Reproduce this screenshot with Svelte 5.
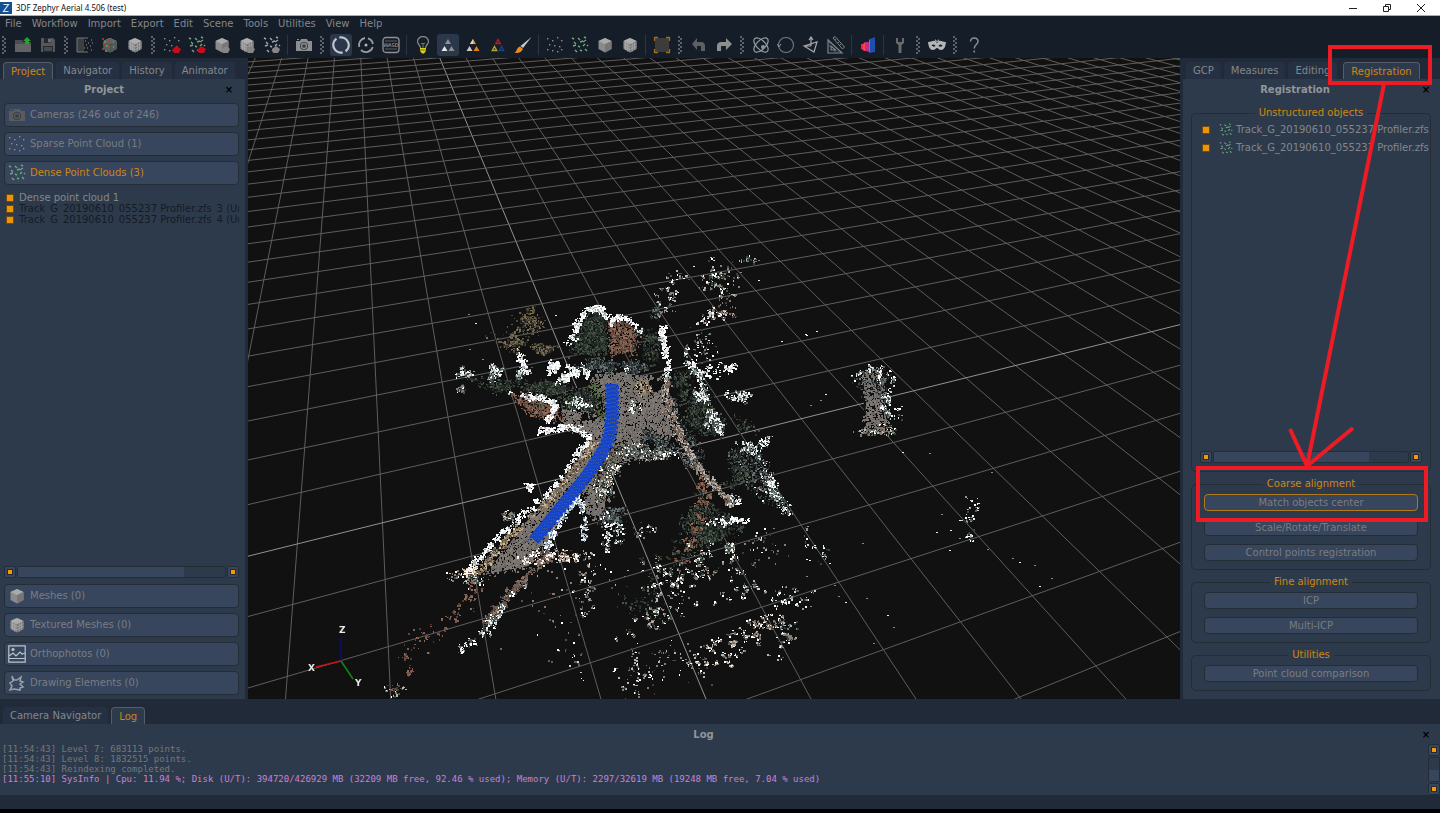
<script>
  /*
    Zephyr workspace shell.

    Top:    title bar, menus, tool strip.
    Middle: project dock, 3D view, registration dock.
    Bottom: log dock.
  */
  import { onMount } from "svelte";

  const menus = ["File", "Workflow", "Import", "Export", "Edit", "Scene", "Tools", "Utilities", "View", "Help"];

  // "|" is a separator, ":" is a drag grip
  const tools = [
    ":", "open", "save", ":", "import", "densecube", "texcube", ":", "sparseup", "denseup", "cubeup",
    "texup", "cloudup", "|", "camera", ":", "orbit*", "pivot", "wasd", "|", "bulb", "tri*", "triwarm",
    "triline", "brush", "|", "sparse", "dense", "cube", "texcube", "|", "select", ":", "undo", "redo",
    ":", "atom", "circle", "plane", "ruler", "|", "bars", "|", "wrench", ":", "mask", ":", "help",
  ];

  const upper = [
    { icon: "camera", label: "Cameras (246 out of 246)" },
    { icon: "sparse", label: "Sparse Point Cloud (1)" },
    { icon: "dense", label: "Dense Point Clouds (3)", active: true },
  ];
  const lower = [
    { icon: "cube", label: "Meshes (0)" },
    { icon: "texcube", label: "Textured Meshes (0)" },
    { icon: "photo", label: "Orthophotos (0)" },
    { icon: "draw", label: "Drawing Elements (0)" },
  ];
  const clouds = [
    { label: "Dense point cloud 1" },
    { label: "Track_G_20190610_055237 Profiler.zfs_3 (Unstructured)", dark: true },
    { label: "Track_G_20190610_055237 Profiler.zfs_4 (Unstructured)", dark: true },
  ];
  const objects = ["Track_G_20190610_055237 Profiler.zfs", "Track_G_20190610_055237 Profiler.zfs"];
  const groups = [
    { title: "Coarse alignment", items: ["Match objects center", "Scale/Rotate/Translate", "Control points registration"] },
    { title: "Fine alignment", items: ["ICP", "Multi-ICP"] },
    { title: "Utilities", items: ["Point cloud comparison"] },
  ];
  const log = ["[11:54:43] Level 7: 683113 points.", "[11:54:43] Level 8: 1832515 points.", "[11:54:43] Reindexing completed."];
  const sysinfo =
    "[11:55:10] SysInfo | Cpu: 11.94 %; Disk (U/T): 394720/426929 MB (32209 MB free, 92.46 % used); Memory (U/T): 2297/32619 MB (19248 MB free, 7.04 % used)";

  const dots = [[2, 3], [7, 5], [12, 2], [16, 5], [4, 9], [9, 10], [14, 11], [2, 14], [7, 15], [12, 16], [16, 14]];
  const dashes = [[1, 2, 2, 1], [7, 2, 2, 2], [13, 1, 2, 1], [15, 4, -3, 2], [3, 6, 2, 2], [9, 6, 3, -1], [2, 10, 3, -1], [7, 10, 2, 1], [12, 10, 2, -2], [4, 14, 2, 2], [9, 14, 2, 1], [14, 13, 2, 2], [16, 9, 1, 1]];

  let canvas;

  function makeRandom(seed) {
    let s = seed;
    return () => {
      s = (s * 1664525 + 1013904223) >>> 0;
      return s / 4294967296;
    };
  }

  // ground plane (i, j) to view coordinates
  function project(i, j) {
    const w = 0.02786 * i - 0.0707 * j + 1;
    return [(86.3 * i - 24.8 * j + 609.4) / w, (-4.23 * i + 11.05 * j + 466.4) / w];
  }

  function drawGrid(ctx) {
    const line = (a, b, major) => {
      ctx.strokeStyle = major ? "#929292" : "#5e5e5e";
      ctx.beginPath();
      ctx.moveTo(...a);
      ctx.lineTo(...b);
      ctx.stroke();
    };
    for (let i = -22; i <= 60; i++) {
      const near = (0.02786 * i + 0.9) / 0.0707;
      line(project(i, -50), project(i, near), i === 0);
    }
    for (let j = -50; j <= 9; j++) {
      const near = (-0.9 + 0.0707 * j) / 0.02786;
      line(project(near, j), project(60, j), j === 0);
    }
  }

  const white = ["#ffffff", "#f2f4f2", "#c9d1d0", "#8d9898", "#55605c", "#3a4442"];
  const snow = ["#ffffff", "#ffffff", "#f4f4f2", "#dce2e4", "#a9b1b2"];
  const green = ["#2b352d", "#39443a", "#222b29", "#4a5546", "#1a2220"];
  const slate = ["#4b5352", "#2a3233", "#6d7473", "#1b2224", "#3a4445"];
  const road = ["#77716d", "#7e7772", "#716b68", "#847d77", "#696562"];
  const brick = ["#7b5849", "#85604e", "#62473d", "#8f6d5a", "#4d3a33"];
  const tan = ["#94806a", "#82715a", "#a8936f", "#6d6253", "#c9bba0", "#4e463c"];
  const olive = ["#4d483a", "#645a45", "#37362d", "#7c6c50", "#24251f"];
  const ice = ["#e4eef5", "#b9cad6", "#92a4b2", "#ffffff", "#6f808e"];
  const mixed = ["#ffffff", "#b3b7b3", "#7e827c", "#8b7566", "#4c524d", "#31413c"];
  const black = ["#111111", "#111111", "#0c0f0e"];

  // polygons: [corners, count, colours]
  const areas = [
    [[[592, 378], [612, 372], [660, 378], [668, 412], [672, 435], [648, 458], [618, 462], [606, 488], [604, 522], [584, 510], [586, 492], [572, 498], [548, 540], [528, 566], [486, 574], [520, 530], [572, 468], [590, 436], [562, 425], [562, 408], [592, 402]], 30000, road],
    [[[570, 346], [580, 324], [594, 308], [606, 312], [607, 350], [596, 356], [572, 353]], 1500, green],
    [[[608, 322], [622, 317], [638, 328], [634, 352], [610, 354]], 700, brick],
    [[[512, 394], [532, 396], [556, 405], [560, 418], [544, 418], [526, 410]], 1200, brick],
    [[[560, 396], [590, 386], [599, 398], [600, 414], [574, 408], [560, 404]], 800, green],
    [[[644, 430], [664, 438], [678, 450], [658, 456], [636, 458]], 400, slate],
    [[[690, 394], [706, 388], [712, 410], [724, 420], [718, 434], [700, 432], [686, 420]], 1000, green],
    [[[672, 398], [680, 420], [702, 448], [700, 468], [690, 458], [672, 428]], 700, slate],
    [[[730, 450], [744, 444], [760, 456], [776, 492], [786, 510], [764, 500], [744, 480], [732, 468]], 1000, slate],
    [[[692, 508], [706, 500], [726, 514], [744, 528], [718, 540], [690, 536], [682, 525]], 900, green],
    [[[862, 370], [880, 370], [884, 400], [888, 432], [864, 434], [866, 405]], 700, road],
    [[[600, 446], [620, 448], [610, 476], [602, 500], [596, 480]], 500, olive],
    [[[594, 382], [602, 400], [601, 416], [596, 412], [600, 400], [590, 388]], 240, ["#4a5a35", "#59684a"]],
    [[[636, 384], [648, 382], [652, 391], [640, 393]], 120, tan],
  ];

  // thick lines: [points, spread, count, colours]
  const strands = [
    [[[567, 343], [576, 326], [585, 311], [598, 306], [606, 316]], 4, 330, snow],
    [[[609, 323], [614, 318], [625, 317], [640, 328]], 4, 170, snow],
    [[[510, 393], [526, 395], [541, 398], [556, 404], [549, 416], [539, 424]], 4, 300, snow],
    [[[594, 442], [576, 466], [552, 496], [520, 524], [494, 552], [476, 574]], 5, 1000, tan],
    [[[538, 432], [560, 427], [578, 429], [589, 438], [572, 460], [548, 492], [522, 514], [496, 538], [478, 558], [467, 572]], 4, 900, snow],
    [[[661, 326], [663, 340], [665, 356], [667, 378]], 5, 280, snow],
    [[[666, 378], [668, 405], [680, 438], [698, 466], [716, 486], [732, 504]], 7, 1100, ["#8a817a", "#a49a92", "#6a605a", "#75584b", "#c0bab4", "#4c4845"]],
    [[[700, 478], [706, 492], [698, 515], [690, 538], [680, 560]], 9, 320, brick],
    [[[544, 552], [555, 528], [567, 508], [577, 499], [583, 508], [584, 548]], 4, 600, ice],
    [[[604, 510], [607, 530], [606, 552]], 8, 120, white],
    [[[620, 520], [618, 545]], 8, 80, white],
    [[[550, 552], [530, 572], [512, 590], [498, 608], [484, 624]], 8, 700, ["#7b5f50", "#6b5f56", "#4d3f38", "#8f7a6a", "#5a5450"]],
    [[[522, 580], [502, 606], [484, 630], [460, 650]], 7, 230, white],
    [[[478, 570], [474, 588], [462, 608], [448, 622], [430, 640], [404, 660], [390, 690]], 16, 190, brick],
    [[[520, 560], [540, 556], [564, 555], [582, 555]], 10, 260, ["#ffffff", "#b79d8b", "#82695a", "#eeeeee"]],
    [[[584, 550], [586, 580], [584, 610]], 14, 100, mixed],
    [[[688, 362], [700, 368], [716, 372], [736, 365]], 8, 150, snow],
    [[[686, 348], [688, 366], [700, 374], [703, 398], [708, 404]], 7, 240, white],
    [[[710, 412], [718, 422], [719, 434]], 7, 160, white],
    [[[724, 396], [736, 394], [746, 392]], 10, 90, white],
    [[[738, 446], [752, 448], [764, 468], [771, 482], [775, 498]], 9, 300, white],
    [[[752, 447], [770, 440]], 9, 70, white],
    [[[776, 496], [788, 510]], 12, 80, white],
    [[[706, 520], [724, 522], [746, 518]], 6, 120, snow],
    [[[716, 268], [716, 285], [726, 290]], 18, 110, mixed],
    [[[700, 318], [718, 314], [737, 310]], 11, 130, ["#ffffff", "#88736b", "#51443e", "#c7c7c7"]],
    [[[654, 312], [664, 304], [675, 286], [680, 274]], 18, 120, mixed],
    [[[854, 374], [870, 367], [884, 374], [887, 392], [888, 410], [896, 424]], 14, 260, white],
    [[[744, 262], [754, 260]], 9, 26, mixed],
    [[[972, 496], [973, 512], [966, 522]], 12, 38, white],
    [[[964, 540], [972, 532]], 9, 20, white],
    [[[652, 566], [662, 582], [652, 606], [636, 640]], 30, 260, mixed],
    [[[704, 552], [690, 576], [672, 604]], 30, 300, mixed],
    [[[728, 560], [744, 572], [730, 602]], 28, 160, mixed],
    [[[768, 590], [788, 598], [806, 604]], 24, 90, white],
    [[[802, 528], [806, 548], [828, 560]], 16, 36, white],
    [[[696, 668], [722, 652], [748, 634], [772, 624]], 24, 420, ["#ffffff", "#bab4ac", "#8b7a6c", "#66635e", "#4b4844"]],
    [[[770, 620], [788, 632], [778, 650]], 20, 100, mixed],
    [[[622, 664], [640, 690]], 34, 80, mixed],
    [[[560, 650], [590, 680]], 30, 26, white],
    [[[390, 690], [400, 694]], 14, 36, mixed],
    [[[704, 492], [690, 560], [640, 570]], 34, 200, green],
  ];

  // round clumps: [x, y, rx, ry, count, colours]
  const clumps = [
    [522, 360, 8, 10, 130, snow], [522, 373, 8, 9, 130, white], [494, 370, 9, 10, 170, white], [552, 368, 7, 11, 160, snow],
    [564, 378, 9, 7, 140, snow], [574, 371, 9, 8, 140, snow], [585, 372, 6, 10, 140, snow], [557, 385, 6, 6, 70, snow],
    [462, 372, 10, 8, 70, white], [458, 388, 10, 7, 40, mixed], [530, 320, 20, 14, 240, olive], [512, 342, 16, 10, 170, olive],
    [545, 348, 14, 8, 170, olive], [500, 385, 26, 10, 200, green], [545, 388, 22, 9, 460, green], [578, 404, 13, 8, 160, white],
    [600, 365, 26, 9, 420, slate], [632, 366, 16, 8, 320, slate], [650, 345, 22, 22, 250, green], [624, 368, 4, 5, 60, white],
    [634, 408, 7, 7, 70, white], [655, 312, 8, 10, 90, slate], [680, 385, 14, 20, 200, green], [712, 420, 10, 10, 170, white],
    [700, 395, 8, 12, 120, white], [742, 396, 8, 7, 80, white], [740, 425, 22, 14, 50, green], [526, 486, 7, 4, 70, snow],
    [508, 516, 9, 7, 90, mixed], [470, 571, 8, 7, 160, ["#ffffff", "#f0dcc0", "#d0b08a"]], [470, 575, 20, 16, 100, mixed],
    [610, 470, 12, 14, 200, mixed], [600, 490, 14, 12, 160, mixed], [630, 450, 14, 9, 200, mixed], [610, 515, 18, 10, 320, slate],
    [655, 440, 14, 10, 300, slate], [660, 452, 24, 8, 170, mixed], [690, 460, 10, 12, 140, slate], [650, 530, 20, 14, 40, mixed],
    [734, 500, 8, 10, 80, white], [710, 535, 26, 14, 240, green], [728, 548, 10, 8, 80, mixed], [875, 385, 20, 20, 110, slate],
    [878, 430, 24, 8, 80, mixed], [705, 345, 30, 26, 60, mixed], [762, 480, 30, 34, 50, mixed], [740, 470, 16, 20, 180, green],
    [680, 650, 70, 44, 70, mixed], [560, 600, 70, 44, 60, mixed], [715, 300, 40, 40, 60, mixed], [540, 405, 8, 5, 80, olive],
    [640, 600, 40, 40, 70, green], [500, 330, 50, 26, 30, olive], [755, 560, 50, 40, 50, mixed], [440, 640, 60, 40, 30, brick],
    [585, 415, 10, 6, 60, black], [656, 384, 6, 6, 240, black], [650, 444, 9, 7, 60, black], [640, 404, 5, 3, 20, black],
  ];

  const strays = [
    [805, 334], [816, 331], [820, 400], [810, 405], [825, 394], [902, 452], [929, 453], [991, 472], [941, 514], [936, 532],
    [950, 530], [949, 550], [987, 549], [1012, 558], [1019, 562], [1034, 565], [1051, 578], [1039, 586], [862, 543], [838, 596],
    [866, 598], [845, 602], [887, 615], [893, 627], [873, 643], [834, 585], [822, 556], [829, 563], [806, 576], [810, 606],
    [468, 314], [475, 323], [555, 315], [469, 349], [482, 359], [758, 280], [740, 272], [693, 266], [781, 341], [806, 335],
  ];

  function drawCloud(ctx) {
    const random = makeRandom(4506);
    const bell = () => (random() + random() + random()) / 1.5 - 1;
    const dot = (x, y, colors) => {
      ctx.fillStyle = colors[Math.floor(random() * colors.length)];
      ctx.fillRect(Math.round(x), Math.round(y), random() < 0.6 ? 2 : 1, random() < 0.6 ? 2 : 1);
    };

    for (const [corners, count, colors] of areas) {
      const path = new Path2D();
      corners.forEach(([x, y], n) => (n ? path.lineTo(x, y) : path.moveTo(x, y)));
      path.closePath();
      const xs = corners.map((c) => c[0]);
      const ys = corners.map((c) => c[1]);
      const left = Math.min(...xs), top = Math.min(...ys);
      const w = Math.max(...xs) - left, h = Math.max(...ys) - top;
      ctx.save();
      ctx.clip(path);
      for (let n = 0; n < count; n++) dot(left + random() * w, top + random() * h, colors);
      ctx.restore();
      // frayed outline
      for (let n = 0; n < corners.length * 36; n++) {
        const k = Math.floor(random() * corners.length);
        const a = corners[k], b = corners[(k + 1) % corners.length];
        const t = random();
        dot(a[0] + (b[0] - a[0]) * t + bell() * 5, a[1] + (b[1] - a[1]) * t + bell() * 5, random() < 0.4 ? black : colors);
      }
    }
    for (const [x, y, rx, ry, count, colors] of clumps) {
      // a few knots per clump keep the edges ragged
      const knots = Array.from({ length: 4 + Math.floor(count / 18) }, () => [bell() * rx * 1.1, bell() * ry * 1.1]);
      for (let n = 0; n < count; n++) {
        const [kx, ky] = knots[Math.floor(random() * knots.length)];
        dot(x + kx + bell() * rx * 0.5, y + ky + bell() * ry * 0.5, colors);
      }
    }
    for (const [points, spread, count, colors] of strands) {
      const knots = Array.from({ length: 8 + Math.floor(count / 7) }, () => [random() * (points.length - 1), bell() * spread * 0.9, bell() * spread * 0.9]);
      for (let n = 0; n < count; n++) {
        const [at, kx, ky] = knots[Math.floor(random() * knots.length)];
        const k = Math.floor(at);
        const [ax, ay] = points[k];
        const [bx, by] = points[k + 1];
        const t = at - k;
        dot(ax + (bx - ax) * t + kx + bell() * 3.5, ay + (by - ay) * t + ky + bell() * 3.5, colors);
      }
    }
    for (const [x, y] of strays) {
      ctx.fillStyle = random() < 0.5 ? "#eeeeee" : "#888888";
      ctx.fillRect(x, y, 2, 1);
    }
  }

  // scanner track, drawn over the cloud
  function drawTrack(ctx) {
    const random = makeRandom(77);
    const trace = (dx, dy) => {
      ctx.beginPath();
      ctx.moveTo(612 + dx, 384 + dy);
      ctx.bezierCurveTo(612 + dx, 412 + dy, 614 + dx, 432 + dy, 603 + dx, 450 + dy);
      ctx.bezierCurveTo(592 + dx, 470 + dy, 580 + dx, 484 + dy, 568 + dx, 498 + dy);
      ctx.lineTo(534 + dx, 540 + dy);
      ctx.stroke();
    };
    ctx.lineJoin = "round";
    ctx.strokeStyle = "#1243cc";
    ctx.lineWidth = 11;
    trace(0, 0);
    ctx.lineWidth = 2;
    ctx.setLineDash([3, 2]);
    trace(-6, 0);
    trace(6, 2);
    ctx.lineWidth = 1;
    ctx.setLineDash([1, 3]);
    for (const dx of [-5, -3, -1, 1, 3, 5]) {
      ctx.strokeStyle = dx % 3 ? "#5a6380" : "#6f6d70";
      ctx.lineDashOffset = Math.floor(random() * 4);
      trace(dx, 0);
    }
    ctx.setLineDash([]);
  }

  onMount(() => {
    const ctx = canvas.getContext("2d");
    ctx.fillStyle = "#111111";
    ctx.fillRect(0, 0, canvas.width, canvas.height);
    ctx.translate(-248, -58);
    drawGrid(ctx);
    drawCloud(ctx);
    drawTrack(ctx);
  });
</script>

{#snippet specks(green)}
  {#if green}
    {#each dashes as [x, y, dx, dy], n}
      <path d={`M${x} ${y}l${dx} ${dy}`} stroke={n % 3 ? "#5fae72" : "#8b9490"} stroke-width="1.4" />
    {/each}
  {:else}
    {#each dots as [x, y]}
      <rect x={x - 1} y={y - 1} width="1.4" height="1.4" fill="#8d8f92" />
    {/each}
  {/if}
{/snippet}

{#snippet box(textured)}
  <path d="M9 2l6.500 3v8L9 16.500 2.500 13V5z" fill="#8b8b8b" />
  <path d="M9 2l6.500 3L9 8.200 2.500 5z" fill="#a9a9a9" />
  <path d="M9 8.200L15.500 5v8L9 16.500z" fill="#777" />
  {#if textured}
    <path d="M4.500 4v10M6.700 3v12.500M11.300 3v12.500M13.500 4v10M2.500 7.600L9 11l6.500-3.400M2.500 10.300L9 13.700l6.500-3.400M4.700 4l6.500 3M6.800 3l6.500 3" stroke="#b4b4b4" stroke-width=".6" fill="none" />
  {/if}
{/snippet}

{#snippet icon(name)}
  <svg class="icon" viewBox="0 0 18 18" fill="none" aria-hidden="true">
    {#if name === "open"}
      <path d="M1 4h7l1 2h8v10H1z" fill="#4b4d4f" /><path d="M1 8h16v8H1z" fill="#606264" />
      <path d="M13 1l4 4h-2v3h-4V5H9z" fill="#20a52b" />
    {:else if name === "save"}
      <path d="M2 2h12l2 2v12H2z" fill="#55575a" /><path d="M5 2h7v5H5zM4 10h10v6H4z" fill="#25292e" />
      <path d="M9.500 3h2v3h-2zM5 12h8M5 14h8" stroke="#6a6c6e" fill="#777" />
    {:else if name === "import"}
      <path d="M1 2h7v14H1z" fill="#3c3e40" /><path d="M12 2H1v14h11" stroke="#74777a" />
      <path d="M9 5h1M12 7h1M15 4h1M10 9h1M14 10h1M11 12h1M15 14h1M16 7h1M8 12h1" stroke="#999" />
    {:else if name === "densecube"}
      {@render box(true)}
      <path d="M9 2l6.500 3v8L9 16.500 2.500 13V5z" fill="#333c38" fill-opacity=".65" />
      <path d="M1 3h2M2 8h2M1 13h2M6 5h2M7 11h2" stroke="#c33838" stroke-width="1.500" />
      <path d="M3 6h2M5 10h2M4 15h2M12 6h1M12 11h1" stroke="#4fae5a" stroke-width="1.500" />
    {:else if name === "cube" || name === "cubeup"}
      {@render box(false)}
      {#if name === "cubeup"}<path d="M13 10l4 3-2 4h-5l-1-4z" fill="#868686" />{/if}
    {:else if name === "texcube" || name === "texup"}
      {@render box(true)}
      {#if name === "texup"}<path d="M13 10l4 3-2 4h-5l-1-4z" fill="#868686" />{/if}
    {:else if name === "sparse" || name === "sparseup"}
      {@render specks(false)}
      {#if name === "sparseup"}<path d="M13 10l5 3-2 4h-5l-2-3z" fill="#cb0b17" />{/if}
    {:else if name === "dense" || name === "denseup"}
      {@render specks(true)}
      {#if name === "denseup"}<path d="M13 10l5 3-2 4h-5l-2-3z" fill="#cb0b17" />{/if}
    {:else if name === "cloudup"}
      {#each dashes as [x, y, dx, dy]}
        <path d={`M${x} ${y}l${dx} ${dy}`} stroke="#a4a6a8" stroke-width="1.4" />
      {/each}
      <path d="M13 10l4 3-2 4h-5l-1-4z" fill="#868686" />
    {:else if name === "camera"}
      <path d="M1 5h4l1-2h6l1 2h4v10H1z" fill="currentColor" /><path d="M2 3h2v1H2z" fill="currentColor" />
      <circle cx="9" cy="10" r="4" fill="#343d4a" /><circle cx="9" cy="10" r="2.500" stroke="currentColor" stroke-width="1.300" />
    {:else if name === "orbit"}
      <g transform="rotate(-28 9 9)">
        <path d="M8 1.200a7.800 7.800 0 0 0-1 15.200M10 16.800a7.800 7.800 0 0 0 1-15.200" stroke="#c6c6c6" stroke-width="2.200" />
      </g>
    {:else if name === "pivot"}
      <path d="M8 2a7 7 0 0 0-5.700 9M4 14a7 7 0 0 0 11.700-3M15.900 8A7 7 0 0 0 11 2.400" stroke="#9c9c9c" stroke-width="1.800" />
      <circle cx="9" cy="9" r="1.500" fill="#b5b5b5" />
    {:else if name === "wasd"}
      <rect x="1" y="1.500" width="16" height="15" rx="3" stroke="#8f8f8f" stroke-width="1.300" />
      <path d="M3 5h12M3 13h12" stroke="#5b5f64" />
      <text x="9" y="11" text-anchor="middle" font-size="5" fill="#b0b0b0">WASD</text>
    {:else if name === "bulb"}
      <path d="M6.500 12c0-3-3-3.500-3-6.500a5.500 5 0 0 1 11 0c0 3-3 3.500-3 6.500" stroke="#858585" stroke-width="1.300" />
      <path d="M7 7l1 1 1-1 1 1 1-1M9 8v4" stroke="#7c8120" /><path d="M6 12h6v3l-2 2.500H8L6 15z" fill="#d6cf1d" />
      <path d="M6 14h6" stroke="#7b7511" />
    {:else if name === "tri"}
      <path d="M9 3l3 5H6z" fill="#8f8f8f" /><path d="M5.500 10l3 5h-6z" fill="#e6e6e6" /><path d="M12.500 10l3 5h-6z" fill="#8f8f8f" />
    {:else if name === "triwarm"}
      <path d="M9 3l3 5H6z" fill="#f29a25" /><path d="M9 3v5H6z" fill="#e8d8bd" />
      <path d="M5.500 10l3 5h-6z" fill="#c8c8c8" /><path d="M12.500 10l3 5h-6z" fill="#ed7f10" />
    {:else if name === "triline"}
      <path d="M9 3.500l2.200 4H6.800z" stroke="#ad202c" stroke-width="1.400" /><path d="M5.500 10.500l2.200 4H3.300z" stroke="#b6a727" stroke-width="1.400" />
      <path d="M12.500 10.500l2.200 4h-4.400z" stroke="#1d437c" stroke-width="1.400" />
    {:else if name === "brush"}
      <path d="M17.500 1L9 12 6.500 10z" fill="#c9c9c9" /><path d="M6 10.500l3 2.500c-2 4-5 4-8.500 4 2-1 2.500-6 5.500-6.500z" fill="#f18a1c" />
    {:else if name === "select"}
      <path d="M2 2h14v14H2z" fill="#3d3c3b" /><path d="M1.500 5V1.500H5M13 1.500h3.500V5M16.500 13v3.500H13M5 16.500H1.500V13" stroke="#a5691b" stroke-width="1.300" />
    {:else if name === "undo"}
      <path d="M7 2v4h4c3 0 4 2 4 4v5h-4v-5H7v4L2 8z" fill="#5d5f61" />
    {:else if name === "redo"}
      <path d="M11 2l6 6-6 6v-4H6v5H2v-5c0-3 2-4 4-4h5z" fill="#8e8e8c" />
    {:else if name === "atom"}
      <ellipse cx="9" cy="9" rx="9" ry="4.500" transform="rotate(45 9 9)" stroke="#989da4" stroke-width="1.200" />
      <ellipse cx="9" cy="9" rx="9" ry="4.500" transform="rotate(-45 9 9)" stroke="#989da4" stroke-width="1.200" />
      <circle cx="11" cy="11" r="2" fill="#8e939b" />
    {:else if name === "circle"}
      <circle cx="9" cy="9" r="7.500" stroke="#757a80" stroke-width="1.100" /><path d="M0 8l2 3 2-3" stroke="#8e9298" />
    {:else if name === "plane"}
      <path d="M9 10V2M7 4l2-3 2 3M2 10l13-4-3 10zM2 10l7 0" stroke="#a9a9a9" stroke-width="1.200" />
    {:else if name === "ruler"}
      <path d="M1 4v13h14zM4 10v4h4.500z" stroke="#81858a" stroke-width="1.200" /><path d="M6 2l2-1.500 9.500 10.500-2 2z" stroke="#81858a" />
      <path d="M2 7h2M2 10h1M8 16v-2M11 16v-1M9 3l-1 1M12 6l-1 1M14 8l-1 1" stroke="#81858a" stroke-width=".8" />
    {:else if name === "bars"}
      <path d="M2 8h4v7l-4-2z" fill="#ef2738" /><path d="M6 6h5v10l-5-1z" fill="#b4328c" /><path d="M6 6l-2 2v6l2 1z" fill="#ff4050" />
      <path d="M11 3l5-2v15l-5 1z" fill="#1d4fb0" /><path d="M11 3l-1 1v12l1 1z" fill="#4485e6" />
    {:else if name === "wrench"}
      <path d="M5 2v5l2.500 2v8h3V9L13 7V2l-2 0v4H7V2z" fill="#686a6c" />
    {:else if name === "mask"}
      <path d="M0 6c2 .5 5-2 7-1l2 2 2-2c2-1 5 1.500 7 1-.5 5-2 8-5 8-2 0-3-2-4-2s-2 2-4 2c-3 0-4.500-3-5-8z" fill="#b4b5b7" />
      <path d="M3.500 9.500c1.500-1.500 3-1 4 .5-1 1-3 1-4-.5zM10.500 10c1-1.500 2.500-2 4-.5-1 1.500-3 1.500-4 .5z" fill="#151d28" /><path d="M7 3l2 2 2-2v3H7z" fill="#9b9b9b" />
    {:else if name === "help"}
      <path d="M5.500 5.500c0-5 7.500-4.500 7.500 0 0 3-3.800 3-3.800 7M9.200 14.500v2" stroke="#8b8f93" stroke-width="1.500" />
    {:else if name === "photo"}
      <path d="M.8.800h16.400v16.400H.8zM1 13.500h16M1 11l4-3 3 3 4-4 2 2 3-1" stroke="#bcc3cc" stroke-width="1.200" /><circle cx="5" cy="4.500" r="1.600" fill="#bcc3cc" />
    {:else if name === "draw"}
      <path d="M4 2l2 4 3 0 4-3-1 4 3 1-3 2 3 3-3 1 0 2-6-1-4 1 2-4-2-3 3-2z" stroke="#9aa0a8" stroke-width="1.500" />
    {/if}
  </svg>
{/snippet}

{#snippet scroller(vertical)}
  <div class="scroller" class:scroller--vertical={vertical}>
    <button class="step" aria-label="Scroll back"></button>
    <div class="trough"><div class="thumb"></div></div>
    <button class="step" aria-label="Scroll forward"></button>
  </div>
{/snippet}

<div class="shell">
  <header class="titlebar">
    <svg class="logo" viewBox="0 0 12 12" aria-hidden="true">
      <rect width="12" height="12" fill="#144f91" />
      <path d="M3.500 2.500h5L3.500 9.500h5" fill="none" stroke="#d6e5f2" stroke-width="1.200" />
    </svg>
    <span class="caption">3DF Zephyr Aerial 4.506 (test)</span>
    <div class="window-buttons">
      <button aria-label="Minimize"><svg viewBox="0 0 10 10"><path d="M1 5.500h8" /></svg></button>
      <button aria-label="Restore"><svg viewBox="0 0 10 10"><path d="M1.500 3.500h5v5h-5zM3.500 3.500v-2h5v5h-2" /></svg></button>
      <button aria-label="Close"><svg viewBox="0 0 10 10"><path d="M1 1l8 8M9 1L1 9" /></svg></button>
    </div>
  </header>

  <nav class="menubar">
    {#each menus as menu}
      <button>{menu}</button>
    {/each}
  </nav>

  <div class="toolbar" role="toolbar" aria-label="Tools">
    {#each tools as tool}
      {#if tool === "|"}
        <span class="separator"></span>
      {:else if tool === ":"}
        <span class="grip"></span>
      {:else}
        <button class="tool" class:tool--on={tool.endsWith("*")} aria-label={tool.replace("*", "")}>
          {@render icon(tool.replace("*", ""))}
        </button>
      {/if}
    {/each}
  </div>

  <main class="workspace">
    <aside class="dock dock--left">
      <div class="tabs">
        <button class="tab tab--on">Project</button>
        <button class="tab">Navigator</button>
        <button class="tab">History</button>
        <button class="tab">Animator</button>
      </div>
      <section class="panel panel--project">
        <div class="panel-head"><h2>Project</h2><button class="close" aria-label="Close Project">×</button></div>
        <div class="stack">
          {#each upper as row}
            <button class="section" class:section--on={row.active}>{@render icon(row.icon)}{row.label}</button>
          {/each}
        </div>
        <div class="clouds">
          {#each clouds as cloud}
            <label class:dark={cloud.dark}><input type="checkbox" checked /><span>{cloud.label}</span></label>
          {/each}
        </div>
        {@render scroller(false)}
        <div class="stack">
          {#each lower as row}
            <button class="section">{@render icon(row.icon)}{row.label}</button>
          {/each}
        </div>
      </section>
    </aside>

    <div class="view">
      <canvas bind:this={canvas} width="932" height="641"></canvas>
      <svg class="axes" viewBox="0 0 64 68" role="img" aria-label="Axes">
        <path d="M36 35V12" stroke="#0c0c78" stroke-width="1.500" />
        <path d="M36 35L11 41" stroke="#c81414" stroke-width="1.500" />
        <path d="M36 35l12 18" stroke="#0d8a16" stroke-width="1.500" />
        <text x="34" y="7">Z</text>
        <text x="3" y="45">X</text>
        <text x="50" y="60">Y</text>
      </svg>
    </div>

    <aside class="dock dock--right">
      <div class="tabs">
        <button class="tab">GCP</button>
        <button class="tab">Measures</button>
        <button class="tab">Editing</button>
        <button class="tab tab--on">Registration</button>
      </div>
      <section class="panel panel--registration">
        <div class="panel-head"><h2>Registration</h2><button class="close" aria-label="Close Registration">×</button></div>
        <fieldset class="group group--objects">
          <legend>Unstructured objects</legend>
          <div class="objects">
            {#each objects as name}
              <label><input type="checkbox" checked />{@render icon("dense")}<span>{name}</span></label>
            {/each}
          </div>
          {@render scroller(false)}
        </fieldset>
        {#each groups as group}
          <fieldset class="group">
            <legend>{group.title}</legend>
            <div class="actions">
              {#each group.items as item, n}
                <button class="action" class:action--focus={group.title === "Coarse alignment" && n === 0}>{item}</button>
              {/each}
            </div>
          </fieldset>
        {/each}
      </section>
    </aside>
  </main>

  <footer class="logdock">
    <div class="tabs">
      <button class="tab">Camera Navigator</button>
      <button class="tab tab--on">Log</button>
    </div>
    <section class="panel panel--log">
      <div class="panel-head"><h2>Log</h2><button class="close" aria-label="Close Log">×</button></div>
      <div class="log">
        <div class="lines">
          {#each log as line}
            <p>{line}</p>
          {/each}
          <p class="sys">{sysinfo}</p>
        </div>
        {@render scroller(true)}
      </div>
    </section>
  </footer>

  <!-- red call-out from the Registration tab to the first alignment action -->
  <svg class="callout" viewBox="0 0 260 530" aria-hidden="true">
    <rect x="150" y="47" width="100" height="36" />
    <rect x="18" y="468" width="228" height="52" />
    <path d="M204 84L127 466M110 429l17 37 46-38" />
  </svg>
</div>

<style>
  :global(body) {
    background: #000;
  }
  .shell {
    --dark: #202a38;
    --panel: #2d3a4c;
    --raised: #37455d;
    --edge: #242c36;
    --text: #84878a;
    --orange: #cf8712;
    position: relative;
    display: flex;
    flex-direction: column;
    box-sizing: border-box;
    min-height: 100vh;
    padding-bottom: 4px;
    overflow: hidden;
    background: var(--dark);
    border-bottom: 4px solid #000;
    color: var(--text);
    font-family: "DejaVu Sans", Verdana, sans-serif;
    font-size: 10px;
    line-height: 12px;
  }
  button {
    margin: 0; padding: 0; border: 0;
    background: none; color: inherit; font: inherit;
  }
  .icon { display: block; width: 18px; height: 18px; flex: none; }

  .titlebar {
    display: flex; align-items: center; gap: 4px;
    height: 15px;
    background: #fff;
    border-bottom: 1px solid #a9adb1;
    color: #111;
    font-family: "Noto Sans", "Open Sans", sans-serif;
    font-size: 8px;
  }
  .logo { width: 12px; height: 12px; }
  .caption { flex: 1; }
  .window-buttons { display: flex; gap: 24px; padding-right: 14px; }
  .window-buttons svg { display: block; width: 10px; height: 10px; fill: none; stroke: #222; }

  .menubar {
    display: flex; align-items: center; gap: 10px;
    height: 15px;
    padding-left: 5px;
    background: #151d28;
  }
  .toolbar {
    display: flex; align-items: center; gap: 3px;
    height: 27px;
    background: #151d28;
  }
  .tool {
    display: grid; place-items: center;
    width: 22px; height: 22px;
    border-radius: 3px;
    color: #8c8e90;
  }
  .tool--on { background: #2b384c; }
  .separator { width: 4px; height: 20px; background: linear-gradient(90deg, transparent 1px, #2a3442 1px 2px, transparent 2px); }
  .grip {
    width: 9px; height: 18px;
    background: radial-gradient(circle at 3px 1px, #5c626b 1px, transparent 1px) 0 0 / 9px 4px,
      radial-gradient(circle at 5px 3px, #5c626b 1px, transparent 1px) 0 0 / 9px 4px;
  }

  .workspace { flex: 1; display: flex; min-height: 0; }
  .dock { display: flex; flex-direction: column; padding-top: 4px; box-sizing: border-box; }
  .dock--left { width: 248px; padding-right: 3px; }
  .dock--right { width: 260px; padding-left: 3px; }
  .tabs { display: flex; gap: 3px; padding-left: 3px; }
  .tab {
    height: 17px;
    padding: 1px 7px 0;
    box-sizing: border-box;
    background: #253143;
    border-radius: 4px 4px 0 0;
  }
  .tab--on {
    background: var(--panel);
    border: 1px solid #565d66;
    border-bottom: 0;
    color: var(--orange);
  }
  .panel { flex: 1; display: flex; flex-direction: column; background: var(--panel); }
  .panel-head { display: flex; align-items: center; height: 19px; padding-top: 1px; }
  .panel-head h2 { flex: 1; margin: 0; font-size: 10px; text-align: center; color: #92959a; }
  .close { width: 10px; color: #000; font-weight: bold; }

  .panel--project { padding: 0 6px 4px 4px; }
  .panel--project .panel-head { margin-bottom: 4px; padding-right: 5px; }
  .panel--project h2 { padding-right: 20px; }
  .stack { display: flex; flex-direction: column; gap: 5px; }
  .section {
    display: flex; align-items: center; gap: 4px;
    height: 24px;
    padding: 0 3px;
    background: var(--raised);
    border: 1px solid var(--edge);
    border-radius: 4px;
    color: #797d82;
    text-align: left;
    box-sizing: border-box;
  }
  .section .icon { color: #5a5b5c; }
  .section--on { color: var(--orange); }
  .clouds { flex: 1; padding-top: 7px; }
  .clouds label {
    display: flex; align-items: center; gap: 5px;
    height: 11px;
    padding-left: 2px;
    white-space: nowrap;
    overflow: hidden;
    line-height: 11px;
  }
  .clouds .dark { color: #151b25; }
  input {
    appearance: none;
    flex: none;
    width: 8px; height: 8px;
    margin: 0;
    background: #ef9406;
    border: 1px solid #6d4a14;
  }

  .scroller { display: flex; gap: 1px; height: 12px; margin-bottom: 6px; }
  .step {
    width: 12px; height: 12px;
    box-sizing: border-box;
    border: 1px solid var(--edge);
    border-radius: 2px;
    background: linear-gradient(#f39a08, #f39a08) center / 4px 4px no-repeat,
      linear-gradient(#2c2a26, #2c2a26) center / 6px 6px no-repeat, var(--raised);
  }
  .trough { flex: 1; border: 1px solid var(--edge); border-radius: 2px; }
  .thumb { width: 80%; height: 100%; background: var(--raised); }
  .scroller--vertical { flex-direction: column; width: 12px; height: auto; margin: 0; }
  .scroller--vertical .trough { display: flex; align-items: flex-end; }
  .scroller--vertical .thumb { width: 100%; height: 50%; }

  .view { flex: 1; position: relative; background: #111; overflow: hidden; }
  .view canvas {
    position: absolute; inset: 0;
    width: 100%; height: 100%;
    object-fit: cover;
  }
  .axes { position: absolute; left: 57px; bottom: 5px; width: 64px; height: 68px; overflow: visible; }
  .axes text { font-weight: bold; font-size: 9px; fill: #e8e8e8; }

  .dock--right .tab--on { margin-left: 3px; }
  .panel--registration { padding: 0 9px 8px 8px; }
  .panel--registration .panel-head { margin-bottom: 8px; }
  .panel--registration h2 { padding-right: 22px; }
  .group {
    margin: 0 0 6px;
    padding: 4px 12px 8px;
    min-width: 0;
    border: 1px solid var(--edge);
    border-radius: 5px;
  }
  .group:last-child { margin-bottom: 0; }
  .group legend { margin: 0 auto; padding: 0 4px; color: var(--orange); }
  .group--objects { flex: 1; display: flex; flex-direction: column; padding: 2px 8px; }
  .objects { flex: 1; }
  .group--objects .scroller { margin-bottom: 6px; }
  .objects label { display: flex; align-items: center; height: 18px; padding-left: 2px; white-space: nowrap; }
  .objects .icon { width: 14px; height: 14px; margin: 0 3px 0 9px; }
  .actions { display: flex; flex-direction: column; gap: 8px; }
  .action {
    height: 17px;
    background: var(--raised);
    border: 1px solid var(--edge);
    border-radius: 4px;
    color: #797d82;
  }
  .action--focus { border-color: #b07a1c; }

  .logdock { padding: 8px 0 10px; }
  .logdock .panel-head { padding-right: 9px; }
  .logdock h2 { padding-right: 14px; }
  .log { display: flex; }
  .lines {
    flex: 1;
    padding: 0 0 11px 2px;
    font-family: "DejaVu Sans Mono", monospace;
    font-size: 9px;
    line-height: 10px;
    color: #74787b;
    white-space: nowrap;
    overflow: hidden;
  }
  .lines p { margin: 0; }
  .lines .sys { color: #cb80d6; }

  .callout {
    position: absolute; top: 0; right: 0;
    width: 260px; height: 530px;
    fill: none; stroke: #ed1c24; stroke-width: 4;
    pointer-events: none;
  }
</style>
